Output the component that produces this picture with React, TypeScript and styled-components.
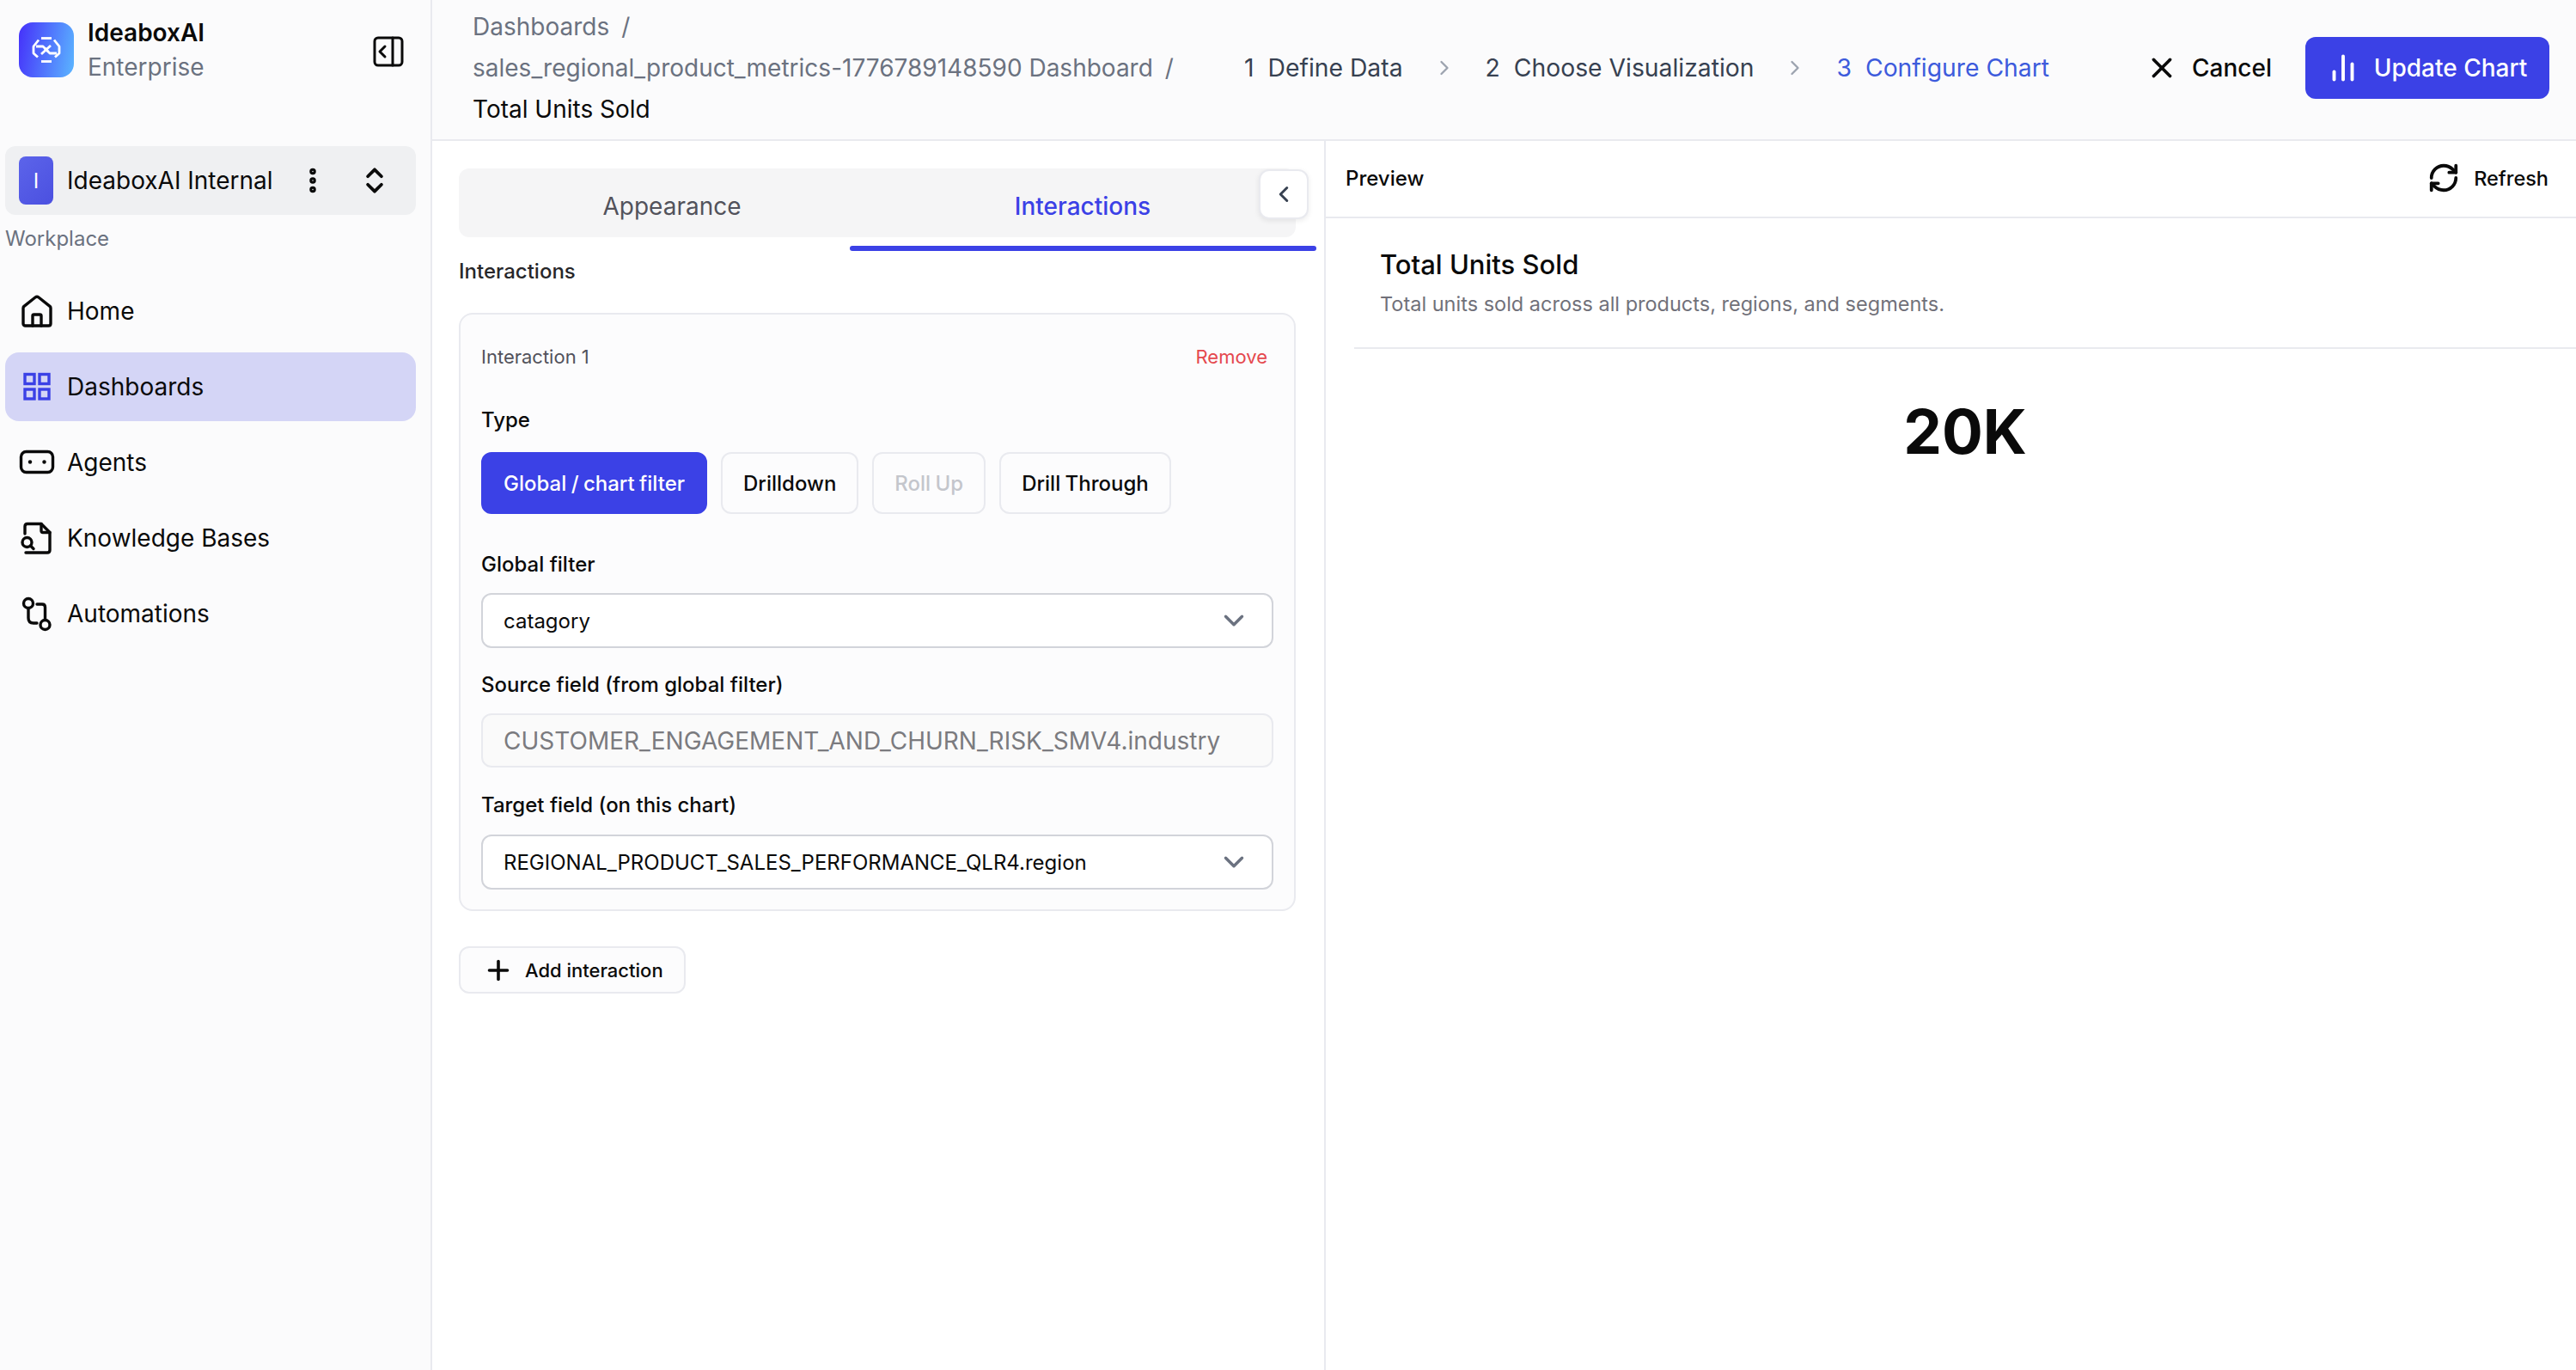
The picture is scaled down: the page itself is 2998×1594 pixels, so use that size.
import React from 'react';
import styled, { createGlobalStyle } from 'styled-components';
import { ChevronDown, ChevronLeft, ChevronRight, ChevronsUpDown, EllipsisVertical, ChartNoAxesColumn, Plus, RefreshCw, X } from 'lucide-react';

const BLUE = '#3b41e6';
const BORDER = '#e9eaef';
const GRAY = '#6b7280';
const FONT = 'Inter, "Liberation Sans", sans-serif';

const GlobalStyle = createGlobalStyle`
    html, body {
        margin: 0;
        padding: 0;
        height: 100%;
        background: #ffffff;
        color: #0a0a0a;
        font-family: ${FONT};
    }
    * {
        box-sizing: border-box;
    }
`;

const Page = styled.div`
    display: flex;
    width: 2998px;
    height: 1594px;
    overflow: hidden;
`;

/* sidebar */

const Sidebar = styled.aside`
    flex: 0 0 503px;
    display: flex;
    flex-direction: column;
    padding: 0 17px 0 6px;
    background: #fbfbfc;
    border-right: 2px solid ${BORDER};
`;

const Brand = styled.div`
    display: flex;
    align-items: center;
    height: 116px;
    padding: 0 0 0 16px;
    gap: 16px;
`;

const LogoBox = styled.div`
    display: flex;
    align-items: center;
    justify-content: center;
    width: 64px;
    height: 64px;
    border-radius: 16px;
    background: linear-gradient(100deg, #4530fa 0%, #5bb6ff 100%);
`;

const BrandText = styled.div`
    flex: 1;
    display: flex;
    flex-direction: column;
    gap: 2px;
`;

const BrandName = styled.span`
    font-size: 28px;
    line-height: 38px;
    font-weight: 600;
    color: #0a0a0a;
`;

const BrandPlan = styled.span`
    font-size: 28px;
    line-height: 38px;
    color: ${GRAY};
`;

const CollapseIcon = styled.svg`
    width: 36px;
    height: 36px;
    margin: 4px 14px 0 0;
`;

const Workspace = styled.div`
    display: flex;
    align-items: center;
    height: 80px;
    margin-top: 54px;
    padding: 0 16px;
    border-radius: 12px;
    background: #eff0f2;
`;

const Avatar = styled.div`
    display: flex;
    align-items: center;
    justify-content: center;
    width: 40px;
    height: 56px;
    margin-right: 16px;
    border-radius: 8px;
    background: linear-gradient(135deg, #5c64ea 0%, #4b50e0 100%);
    color: #ffffff;
    font-size: 24px;
`;

const WorkspaceName = styled.span`
    flex: 1;
    font-size: 28px;
    white-space: nowrap;
`;

const WorkspaceIcons = styled.div`
    display: flex;
    align-items: center;
    gap: 35px;
    margin-right: 13px;
`;

const GroupLabel = styled.div`
    height: 32px;
    margin: 12px 0 28px 0;
    font-size: 24px;
    line-height: 32px;
    color: ${GRAY};
`;

const Nav = styled.nav`
    display: flex;
    flex-direction: column;
    gap: 8px;
`;

const NavItem = styled.div<{ $active?: boolean }>`
    display: flex;
    align-items: center;
    gap: 14px;
    height: 80px;
    padding: 0 0 0 16px;
    border-radius: 16px;
    background: ${(p) => (p.$active ? '#d4d5f6' : 'transparent')};
    font-size: 28px;
    color: #0a0a0a;
`;

const NavIcon = styled.svg`
    flex: 0 0 42px;
    width: 42px;
    height: 42px;
`;

/* right side */

const Main = styled.div`
    flex: 1;
    display: flex;
    flex-direction: column;
    min-width: 0;
`;

const Header = styled.header`
    flex: 0 0 164px;
    display: flex;
    align-items: center;
    padding: 0 31px 4px 47px;
    background: #fbfbfc;
    border-bottom: 2px solid ${BORDER};
`;

const Crumbs = styled.div`
    flex: 0 0 898px;
    display: flex;
    flex-wrap: wrap;
    font-size: 28px;
    line-height: 48px;
    color: ${GRAY};
`;

const Crumb = styled.span`
    white-space: nowrap;
    &::after {
        content: '/';
        margin: 0 12px 0 14px;
    }
`;

const CrumbCurrent = styled.span`
    white-space: nowrap;
    color: #0a0a0a;
`;

const Steps = styled.div`
    flex: 1;
    display: flex;
    align-items: center;
    gap: 34px;
    font-size: 28.3px;
`;

const Step = styled.span<{ $active?: boolean }>`
    display: flex;
    gap: 16px;
    white-space: nowrap;
    color: ${(p) => (p.$active ? '#3d5bdc' : '#374151')};
`;

const CancelButton = styled.div`
    display: flex;
    align-items: center;
    gap: 16px;
    margin-right: 39px;
    font-size: 28px;
    font-weight: 500;
    color: #0a0a0a;
`;

const UpdateButton = styled.div`
    display: flex;
    align-items: center;
    justify-content: center;
    gap: 18px;
    width: 284px;
    height: 72px;
    border-radius: 12px;
    background: ${BLUE};
    font-size: 28px;
    font-weight: 500;
    color: #ffffff;
`;

const Body = styled.div`
    flex: 1;
    display: flex;
    min-height: 0;
`;

const ConfigPanel = styled.section`
    flex: 0 0 1040px;
    padding: 32px 0 0 31px;
    background: #ffffff;
    border-right: 2px solid ${BORDER};
`;

const TabsWrap = styled.div`
    position: relative;
    width: 974px;
`;

const TabBar = styled.div`
    display: grid;
    grid-template-columns: 1fr 1fr;
    height: 80px;
    padding: 8px 9px 0;
    border-radius: 12px;
    background: #f5f5f6;
`;

const Tab = styled.div<{ $active?: boolean }>`
    display: flex;
    align-items: center;
    justify-content: center;
    font-size: 28px;
    font-weight: ${(p) => (p.$active ? 500 : 400)};
    color: ${(p) => (p.$active ? BLUE : '#52525b')};
`;

const TabLine = styled.div`
    width: 543px;
    height: 6px;
    margin: 10px -24px 0 455px;
    border-radius: 3px;
    background: ${BLUE};
`;

const PanelToggle = styled.div`
    position: absolute;
    top: 1px;
    left: 931px;
    display: flex;
    align-items: center;
    justify-content: center;
    width: 58px;
    height: 58px;
    border: 2px solid ${BORDER};
    border-radius: 12px;
    background: #ffffff;
    box-shadow: 0 2px 6px rgba(0, 0, 0, 0.08);
    color: #374151;
`;

const SectionTitle = styled.div`
    height: 32px;
    margin-top: 8px;
    font-size: 24px;
    line-height: 32px;
    font-weight: 500;
    color: #27272a;
`;

const Card = styled.div`
    width: 974px;
    height: 696px;
    margin-top: 32px;
    padding: 33px 24px 0;
    border: 2px solid ${BORDER};
    border-radius: 16px;
    background: #fcfcfd;
`;

const CardHead = styled.div`
    display: flex;
    align-items: center;
    justify-content: space-between;
    height: 32px;
    font-size: 22px;
    color: #52525b;
`;

const RemoveLink = styled.span`
    margin-right: 7px;
    color: #e5484d;
`;

const FieldLabel = styled.div<{ $top: number; $bottom: number }>`
    height: 32px;
    margin: ${(p) => p.$top}px 0 ${(p) => p.$bottom}px;
    font-size: 24px;
    line-height: 32px;
    font-weight: 500;
    color: #0a0a0a;
`;

const TypeRow = styled.div`
    display: flex;
    gap: 16px;
`;

const TypeButton = styled.div<{ $active?: boolean; $disabled?: boolean }>`
    display: flex;
    align-items: center;
    height: 72px;
    padding: 0 24px;
    border: 2px solid ${(p) => (p.$active ? BLUE : BORDER)};
    border-radius: 12px;
    background: ${(p) => (p.$active ? BLUE : '#fcfcfd')};
    font-size: 24px;
    font-weight: 500;
    word-spacing: -1px;
    color: ${(p) => (p.$active ? '#ffffff' : p.$disabled ? '#c4c6cc' : '#0a0a0a')};
`;

const SelectBox = styled.div`
    display: flex;
    align-items: center;
    justify-content: space-between;
    height: 64px;
    padding: 0 25px 0 24px;
    border: 2px solid #d2d4da;
    border-radius: 12px;
    background: #ffffff;
    font-size: 24px;
    color: #0a0a0a;
`;

const ReadonlyBox = styled.div`
    display: flex;
    align-items: center;
    height: 63px;
    padding: 0 24px;
    border: 2px solid ${BORDER};
    border-radius: 12px;
    background: #fafafa;
    font-size: 28px;
    color: #7b7b7f;
    white-space: nowrap;
`;

const AddButton = styled.div`
    display: flex;
    align-items: center;
    gap: 13px;
    width: 264px;
    height: 55px;
    margin-top: 41px;
    padding: 0 0 0 26px;
    border: 2px solid ${BORDER};
    border-radius: 12px;
    background: #fcfcfd;
    font-size: 22px;
    font-weight: 500;
    color: #0a0a0a;
`;

const PreviewPanel = styled.section`
    flex: 1;
    display: flex;
    flex-direction: column;
    background: #ffffff;
`;

const PreviewHead = styled.div`
    flex: 0 0 90px;
    display: flex;
    align-items: center;
    justify-content: space-between;
    padding: 0 32px 2px 23px;
    border-bottom: 2px solid ${BORDER};
    font-size: 24px;
`;

const PreviewLabel = styled.span`
    font-weight: 500;
`;

const RefreshButton = styled.div`
    display: flex;
    align-items: center;
    gap: 16px;
    font-size: 23.5px;
    font-weight: 500;
`;

const ChartHead = styled.div`
    display: flex;
    flex-direction: column;
    height: 152px;
    margin-left: 33px;
    padding: 32px 0 0 30px;
    border-bottom: 2px solid ${BORDER};
`;

const ChartTitle = styled.div`
    font-size: 31px;
    line-height: 44px;
    font-weight: 500;
`;

const ChartDesc = styled.div`
    margin-top: 8px;
    font-size: 23.5px;
    line-height: 32px;
    color: #71717a;
`;

const Metric = styled.div`
    margin-top: 52px;
    padding-left: 33px;
    text-align: center;
    font-size: 71px;
    line-height: 88px;
    font-weight: 700;
    color: #0a0a0a;
`;

function Logo() {
    return (
        <svg width="34" height="32" viewBox="0 0 34 32" fill="none" stroke="#fff" strokeWidth="2.8" strokeLinejoin="round">
            <path d="M11 2.500H23" />
            <path d="M8 4.500 2 12V20L7 24.500" />
            <path d="M26 4.500 32 12V20L27 24.500" />
            <path d="M11 29.500H23" />
            <path d="M5 12H13L19 18" />
            <path d="M29 20H21L15 14" />
            <path d="M11 21 22 11" />
        </svg>
    );
}

function Icon({ children }: { children: React.ReactNode }) {
    return (
        <NavIcon viewBox="0 0 42 42" fill="none" stroke="#0a0a0a" strokeWidth="3.4" strokeLinecap="round" strokeLinejoin="round">
            {children}
        </NavIcon>
    );
}

const HomeIcon = () => (
    <Icon>
        <path d="M5 35.5V17.5C5 16.500 5.500 15.800 6 15.300L19 5C20.200 4.100 21.800 4.100 23 5L36 15.300C36.500 15.800 37 16.500 37 17.500V35.500C37 37 36 38 34.500 38H7.500C6 38 5 37 5 35.500Z" />
        <path d="M16 38V26.500C16 25.500 16.500 25 17.500 25H24.500C25.500 25 26 25.500 26 26.500V38" />
    </Icon>
);

const DashIcon = () => (
    <NavIcon viewBox="0 0 42 42" fill="none" stroke={BLUE} strokeWidth="3.400">
        <rect x="7" y="6.500" width="11" height="11" />
        <rect x="24" y="6.500" width="11" height="11" />
        <rect x="7" y="24" width="11" height="11" />
        <rect x="24" y="24" width="11" height="11" />
    </NavIcon>
);

const AgentIcon = () => (
    <Icon>
        <rect x="2.500" y="8.500" width="37" height="24" rx="6" />
        <circle cx="13" cy="20.500" r="2.200" fill="#0a0a0a" stroke="none" />
        <circle cx="29.500" cy="20.500" r="2.200" fill="#0a0a0a" stroke="none" />
    </Icon>
);

const KnowledgeIcon = () => (
    <Icon>
        <path d="M7 16V7.500C7 5.500 8 4.500 10 4.500H26L36 14.500V35C36 37 35 38 33 38H8" />
        <path d="M26 4.500V12.500C26 13.800 26.800 14.500 28 14.500H36" />
        <circle cx="9.500" cy="26" r="5.500" />
        <path d="M13.500 30 17 33.500" />
    </Icon>
);

const AutomationIcon = () => (
    <Icon>
        <circle cx="11" cy="9" r="5.500" />
        <circle cx="30.500" cy="34" r="5.500" />
        <path d="M11 15V26C11 30 13 32 17 32H21" />
        <path d="M21 10H27C29.500 10 30.500 11 30.500 13.500V28" />
    </Icon>
);

const navItems = [
    { label: 'Home', icon: <HomeIcon /> },
    { label: 'Dashboards', icon: <DashIcon />, active: true },
    { label: 'Agents', icon: <AgentIcon /> },
    { label: 'Knowledge Bases', icon: <KnowledgeIcon /> },
    { label: 'Automations', icon: <AutomationIcon /> },
];

export default function App() {
    return (
        <Page>
            <GlobalStyle />
            <Sidebar>
                <Brand>
                    <LogoBox>
                        <Logo />
                    </LogoBox>
                    <BrandText>
                        <BrandName>IdeaboxAI</BrandName>
                        <BrandPlan>Enterprise</BrandPlan>
                    </BrandText>
                    <CollapseIcon viewBox="0 0 36 36" fill="none" stroke="#0a0a0a" strokeWidth="3" strokeLinecap="round" strokeLinejoin="round">
                        <rect x="2" y="2" width="32" height="32" rx="4" />
                        <path d="M23 2V34" />
                        <path d="M14 12 8 18 14 24" />
                    </CollapseIcon>
                </Brand>
                <Workspace>
                    <Avatar>I</Avatar>
                    <WorkspaceName>IdeaboxAI Internal</WorkspaceName>
                    <WorkspaceIcons>
                        <EllipsisVertical size={36} strokeWidth={3} color="#0a0a0a" />
                        <ChevronsUpDown size={38} strokeWidth={2.4} color="#0a0a0a" />
                    </WorkspaceIcons>
                </Workspace>
                <GroupLabel>Workplace</GroupLabel>
                <Nav>
                    {navItems.map((item) => (
                        <NavItem key={item.label} $active={item.active}>
                            {item.icon}
                            {item.label}
                        </NavItem>
                    ))}
                </Nav>
            </Sidebar>
            <Main>
                <Header>
                    <Crumbs>
                        <Crumb>Dashboards</Crumb>
                        <Crumb>sales_regional_product_metrics-1776789148590 Dashboard</Crumb>
                        <CrumbCurrent>Total Units Sold</CrumbCurrent>
                    </Crumbs>
                    <Steps>
                        <Step><span>1</span>Define Data</Step>
                        <ChevronRight size={28} color="#9ca3af" />
                        <Step><span>2</span>Choose Visualization</Step>
                        <ChevronRight size={28} color="#9ca3af" />
                        <Step $active><span>3</span>Configure Chart</Step>
                    </Steps>
                    <CancelButton>
                        <X size={38} strokeWidth={2.4} />
                        Cancel
                    </CancelButton>
                    <UpdateButton>
                        <ChartNoAxesColumn size={36} strokeWidth={2.6} />
                        Update Chart
                    </UpdateButton>
                </Header>
                <Body>
                    <ConfigPanel>
                        <TabsWrap>
                            <TabBar>
                                <Tab>Appearance</Tab>
                                <Tab $active>Interactions</Tab>
                            </TabBar>
                            <TabLine />
                            <PanelToggle>
                                <ChevronLeft size={30} strokeWidth={2.4} />
                            </PanelToggle>
                        </TabsWrap>
                        <SectionTitle>Interactions</SectionTitle>
                        <Card>
                            <CardHead>
                                <span>Interaction 1</span>
                                <RemoveLink>Remove</RemoveLink>
                            </CardHead>
                            <FieldLabel $top={42} $bottom={21}>Type</FieldLabel>
                            <TypeRow>
                                <TypeButton $active>Global / chart filter</TypeButton>
                                <TypeButton>Drilldown</TypeButton>
                                <TypeButton $disabled>Roll Up</TypeButton>
                                <TypeButton>Drill Through</TypeButton>
                            </TypeRow>
                            <FieldLabel $top={43} $bottom={17}>Global filter</FieldLabel>
                            <SelectBox>
                                catagory
                                <ChevronDown size={38} strokeWidth={2.2} color="#6b7280" />
                            </SelectBox>
                            <FieldLabel $top={27} $bottom={17}>Source field (from global filter)</FieldLabel>
                            <ReadonlyBox>CUSTOMER_ENGAGEMENT_AND_CHURN_RISK_SMV4.industry</ReadonlyBox>
                            <FieldLabel $top={28} $bottom={18}>Target field (on this chart)</FieldLabel>
                            <SelectBox>
                                REGIONAL_PRODUCT_SALES_PERFORMANCE_QLR4.region
                                <ChevronDown size={38} strokeWidth={2.2} color="#6b7280" />
                            </SelectBox>
                        </Card>
                        <AddButton>
                            <Plus size={36} strokeWidth={2.4} />
                            Add interaction
                        </AddButton>
                    </ConfigPanel>
                    <PreviewPanel>
                        <PreviewHead>
                            <PreviewLabel>Preview</PreviewLabel>
                            <RefreshButton>
                                <RefreshCw size={38} strokeWidth={2.4} />
                                Refresh
                            </RefreshButton>
                        </PreviewHead>
                        <ChartHead>
                            <ChartTitle>Total Units Sold</ChartTitle>
                            <ChartDesc>Total units sold across all products, regions, and segments.</ChartDesc>
                        </ChartHead>
                        <Metric>20K</Metric>
                    </PreviewPanel>
                </Body>
            </Main>
        </Page>
    );
}
